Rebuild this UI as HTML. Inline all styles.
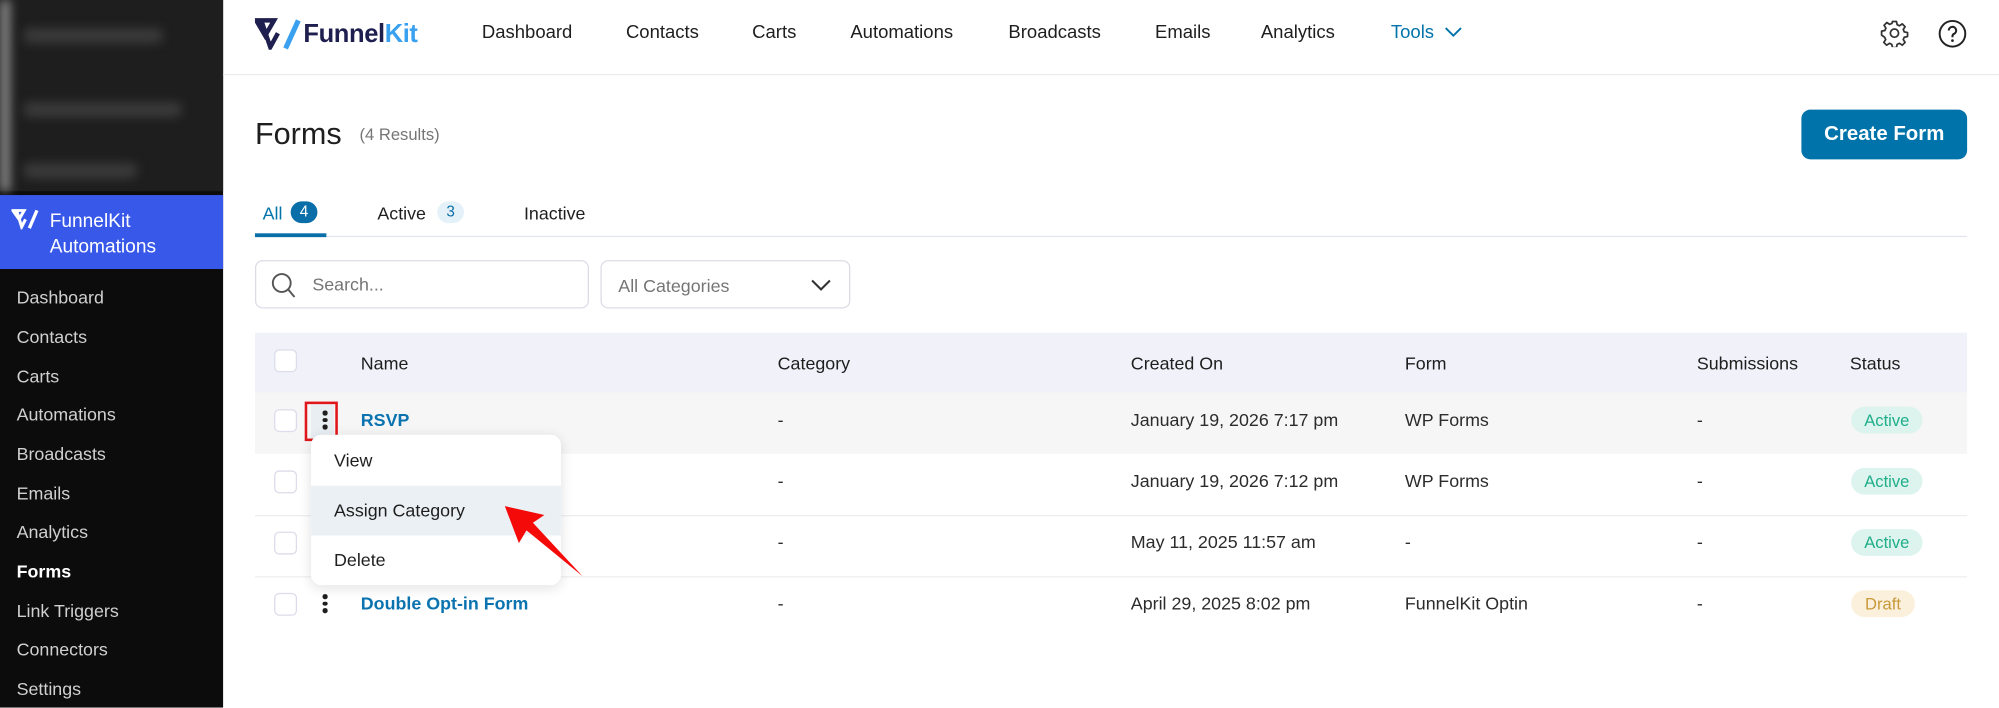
<!DOCTYPE html>
<html><head><meta charset="utf-8"><style>
*{box-sizing:border-box;margin:0;padding:0}
html,body{width:1999px;height:708px;overflow:hidden;background:#fff}
#w{width:1568px;height:555px;transform:scale(1.27487);transform-origin:0 0;position:relative;font-family:"Liberation Sans",sans-serif;color:#1e1e1e}
.a{position:absolute;white-space:nowrap}
#sb{position:absolute;left:0;top:0;width:175px;height:555px;background:#0c0c0c}
#sbt{position:absolute;left:0;top:0;width:175px;height:150px;background:#1e1e1e}
.blur{position:absolute;height:12px;background:#3a3a3a;border-radius:6px;filter:blur(4px)}
#blue{position:absolute;left:0;top:153px;width:175px;height:58px;background:#3858e9}
.mi{position:absolute;left:13px;font-size:14px;color:#d0d0d0}
.nav{top:18px;font-size:14.5px;color:#1e1e1e}
.th{top:277px;font-size:14px;color:#1e1e1e}
.cb{position:absolute;left:215px;width:18px;height:18px;border:1.5px solid #dcdcea;border-radius:4px;background:#fff}
.td{font-size:14px;color:#2c2c2c}
.badge{position:absolute;left:1452px;width:56px;height:21px;border-radius:11px;background:#ddf4ee;color:#1fae8a;font-size:13px;text-align:center;line-height:21px}
.hl{position:absolute;left:200px;width:1343px;height:1px;background:#eeeef2}
.kb{position:absolute;width:4px}
.kb i{display:block;width:3.5px;height:3.5px;border-radius:50%;background:#1e1e1e;margin-bottom:2px}
</style></head><body><div id="w">
<div id="sb"></div><div id="sbt"></div>
<div class="blur" style="left:0;top:0;width:8px;height:150px;background:#888;border-radius:0"></div>
<div class="blur" style="left:18px;top:22px;width:110px"></div>
<div class="blur" style="left:18px;top:80px;width:125px"></div>
<div class="blur" style="left:18px;top:128px;width:90px"></div>
<div id="blue"></div>
<svg class="a" style="left:9px;top:164px" width="24" height="16" viewBox="0 0 24 16"><path d="M1 1h9l-4 7z M4 1l4 13 3-6" fill="none" stroke="#fff" stroke-width="2.4"/><path d="M20 1l-6 14" stroke="#fff" stroke-width="2.6"/></svg>
<div class="a" style="left:39px;top:164px;font-size:15px;color:#fff;line-height:20px">FunnelKit<br>Automations</div>
<div class="mi" style="top:225px">Dashboard</div>
<div class="mi" style="top:256px">Contacts</div>
<div class="mi" style="top:287px">Carts</div>
<div class="mi" style="top:317px">Automations</div>
<div class="mi" style="top:348px">Broadcasts</div>
<div class="mi" style="top:379px">Emails</div>
<div class="mi" style="top:409px">Analytics</div>
<div class="mi" style="top:440px;color:#fff;font-weight:bold">Forms</div>
<div class="mi" style="top:471px">Link Triggers</div>
<div class="mi" style="top:501px">Connectors</div>
<div class="mi" style="top:532px">Settings</div>

<div class="a" style="left:175px;top:58px;width:1393px;height:1px;background:#ececec"></div>
<svg class="a" style="left:200px;top:14px" width="38" height="25" viewBox="0 0 38 25"><path d="M1 2h14l-7 12z" fill="none" stroke="#1f1f4f" stroke-width="3.5" stroke-linejoin="miter"/><path d="M5 2l7 21 6-11" fill="none" stroke="#1f1f4f" stroke-width="3.5"/><path d="M34 2l-10 22" stroke="#3aa0f0" stroke-width="4"/></svg>
<div class="a" style="left:238px;top:16px;font-size:20px;font-weight:bold;color:#1f1f4f;letter-spacing:-0.3px">Funnel<span style="color:#3aa0f0">Kit</span></div>
<div class="a nav" style="left:378px">Dashboard</div>
<div class="a nav" style="left:491px">Contacts</div>
<div class="a nav" style="left:590px">Carts</div>
<div class="a nav" style="left:667px">Automations</div>
<div class="a nav" style="left:791px">Broadcasts</div>
<div class="a nav" style="left:906px">Emails</div>
<div class="a nav" style="left:989px">Analytics</div>
<div class="a nav" style="left:1091px;color:#0073aa">Tools</div>
<svg class="a" style="left:1133px;top:21px" width="14" height="9"><path d="M1 1l6 6 6-6" fill="none" stroke="#0073aa" stroke-width="1.5"/></svg>
<svg class="a" style="left:1475px;top:15px" width="22" height="22" viewBox="0 0 24 24"><path d="M10.3 2h3.4l.6 2.8 2 .9 2.4-1.6 2.4 2.4-1.6 2.4.9 2 2.8.6v3.4l-2.8.6-.9 2 1.6 2.4-2.4 2.4-2.4-1.6-2 .9-.6 2.8h-3.4l-.6-2.8-2-.9-2.4 1.6-2.4-2.4 1.6-2.4-.9-2L1 13.7v-3.4l2.8-.6.9-2-1.6-2.4 2.4-2.4 2.4 1.6 2-.9z" fill="none" stroke="#333" stroke-width="1.5" stroke-linejoin="round"/><circle cx="12" cy="12" r="3.5" fill="none" stroke="#333" stroke-width="1.5"/></svg>
<svg class="a" style="left:1520px;top:15px" width="23" height="23" viewBox="0 0 24 24"><circle cx="12" cy="12" r="10.5" fill="none" stroke="#222" stroke-width="1.6"/><path d="M9 9.3a3 3 0 1 1 4.3 2.7c-.9.5-1.3 1-1.3 2v.8" fill="none" stroke="#222" stroke-width="1.7"/><circle cx="12" cy="17.6" r="1.1" fill="#222"/></svg>

<div class="a" style="left:200px;top:92px;font-size:24px;color:#1e1e1e">Forms</div>
<div class="a" style="left:282px;top:98px;font-size:13px;color:#757575">(4 Results)</div>
<div class="a" style="left:1413px;top:86px;width:130px;height:39px;background:#0073aa;border-radius:7px;color:#fff;font-size:16px;font-weight:bold;text-align:center;line-height:39px">Create Form</div>

<div class="a" style="left:206px;top:159px;font-size:14px;color:#0073aa">All</div>
<div class="a" style="left:228px;top:158px;width:21px;height:17px;border-radius:9px;background:#0a6ea8;color:#fff;font-size:12px;text-align:center;line-height:17px">4</div>
<div class="a" style="left:296px;top:159px;font-size:14px">Active</div>
<div class="a" style="left:343px;top:158px;width:21px;height:17px;border-radius:9px;background:#e5f1f8;color:#0a6ea8;font-size:12px;text-align:center;line-height:17px">3</div>
<div class="a" style="left:411px;top:159px;font-size:14px">Inactive</div>
<div class="a" style="left:200px;top:185px;width:1343px;height:1px;background:#e2e4ee"></div>
<div class="a" style="left:200px;top:183px;width:56px;height:3px;background:#0a6ea8"></div>

<div class="a" style="left:200px;top:204px;width:262px;height:38px;border:1px solid #dcdce6;border-radius:6px"></div>
<svg class="a" style="left:212px;top:213px" width="22" height="22"><circle cx="9" cy="9" r="7" fill="none" stroke="#555" stroke-width="1.5"/><path d="M14 14l5 6" stroke="#555" stroke-width="1.5"/></svg>
<div class="a" style="left:245px;top:215px;font-size:14px;color:#757575">Search...</div>
<div class="a" style="left:471px;top:204px;width:196px;height:38px;border:1px solid #dcdce6;border-radius:6px"></div>
<div class="a" style="left:485px;top:216px;font-size:14px;color:#757575">All Categories</div>
<svg class="a" style="left:636px;top:219px" width="16" height="10"><path d="M1 1l7 7 7-7" fill="none" stroke="#333" stroke-width="1.6"/></svg>

<div class="a" style="left:200px;top:261px;width:1343px;height:47px;background:#f0f1f9"></div>
<div class="a" style="left:200px;top:308px;width:1343px;height:48px;background:#f6f6f6"></div>
<div class="hl" style="top:404px"></div><div class="hl" style="top:452px"></div>
<div class="cb" style="top:274px"></div><div class="cb" style="top:321px"></div><div class="cb" style="top:369px"></div><div class="cb" style="top:417px"></div><div class="cb" style="top:465px"></div>
<div class="a th" style="left:283px">Name</div><div class="a th" style="left:610px">Category</div><div class="a th" style="left:887px">Created On</div><div class="a th" style="left:1102px">Form</div><div class="a th" style="left:1331px">Submissions</div><div class="a th" style="left:1451px">Status</div>

<div class="a" style="left:244px;top:317px;width:18px;height:27px;background:#e8eef2"></div>
<div class="a" style="left:239px;top:315px;width:26px;height:31px;border:2px solid #e0161b"></div>
<div class="kb" style="left:253px;top:322px"><i></i><i></i><i></i></div>
<div class="kb" style="left:253px;top:466px"><i></i><i></i><i></i></div>

<div class="a td" style="left:283px;top:321px;color:#0a73b0;font-weight:bold">RSVP</div>
<div class="a td" style="left:283px;top:465px;color:#0a73b0;font-weight:bold">Double Opt-in Form</div>
<div class="a td" style="left:610px;top:321px">-</div><div class="a td" style="left:610px;top:369px">-</div><div class="a td" style="left:610px;top:417px">-</div><div class="a td" style="left:610px;top:465px">-</div>
<div class="a td" style="left:887px;top:321px">January 19, 2026 7:17 pm</div>
<div class="a td" style="left:887px;top:369px">January 19, 2026 7:12 pm</div>
<div class="a td" style="left:887px;top:417px">May 11, 2025 11:57 am</div>
<div class="a td" style="left:887px;top:465px">April 29, 2025 8:02 pm</div>
<div class="a td" style="left:1102px;top:321px">WP Forms</div><div class="a td" style="left:1102px;top:369px">WP Forms</div><div class="a td" style="left:1102px;top:417px">-</div><div class="a td" style="left:1102px;top:465px">FunnelKit Optin</div>
<div class="a td" style="left:1331px;top:321px">-</div><div class="a td" style="left:1331px;top:369px">-</div><div class="a td" style="left:1331px;top:417px">-</div><div class="a td" style="left:1331px;top:465px">-</div>
<div class="badge" style="top:319px">Active</div><div class="badge" style="top:367px">Active</div><div class="badge" style="top:415px">Active</div>
<div class="badge" style="top:463px;width:50px;background:#fbf0dc;color:#c9993a">Draft</div>

<div class="a" style="left:244px;top:341px;width:196px;height:118px;background:#fff;border-radius:8px;box-shadow:0 2px 10px rgba(0,0,0,.12);overflow:hidden">
<div style="position:absolute;left:0;top:40px;width:196px;height:39px;background:#eaf0f4"></div>
<div class="a" style="left:18px;top:12px;font-size:14px">View</div>
<div class="a" style="left:18px;top:51px;font-size:14px">Assign Category</div>
<div class="a" style="left:18px;top:90px;font-size:14px">Delete</div>
</div>
<svg class="a" style="left:0;top:0" width="1568" height="555"><path d="M396 397L427 404 418 410 457 452 413 416 407 426Z" fill="#f50a0a"/></svg>
</div></body></html>
